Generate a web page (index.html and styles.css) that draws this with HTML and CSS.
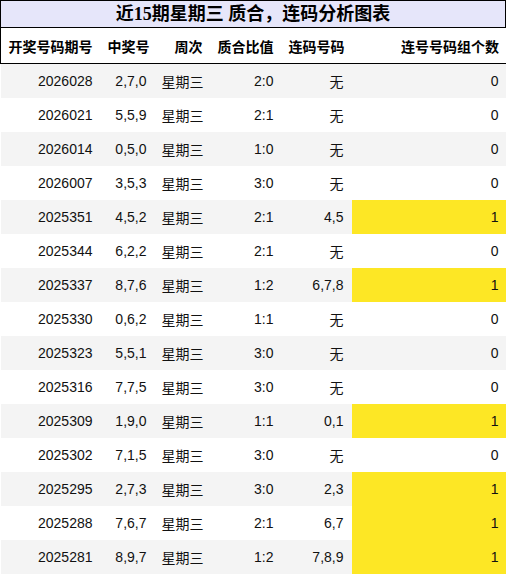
FILE: index.html
```html
<!DOCTYPE html>
<html>
<head>
<meta charset="utf-8">
<link rel="stylesheet" href="styles.css">
</head>
<body>
<div class="title">近15期星期三 质合，连码分析图表</div>
<table class="grid">
<colgroup>
<col class="c1"><col class="c2"><col class="c3"><col class="c4"><col class="c5"><col class="c6">
</colgroup>
<thead>
<tr><th>开奖号码期号</th><th>中奖号</th><th>周次</th><th>质合比值</th><th>连码号码</th><th>连号号码组个数</th></tr>
</thead>
<tbody>
<tr><td>2026028</td><td>2,7,0</td><td>星期三</td><td>2:0</td><td>无</td><td>0</td></tr>
<tr><td>2026021</td><td>5,5,9</td><td>星期三</td><td>2:1</td><td>无</td><td>0</td></tr>
<tr><td>2026014</td><td>0,5,0</td><td>星期三</td><td>1:0</td><td>无</td><td>0</td></tr>
<tr><td>2026007</td><td>3,5,3</td><td>星期三</td><td>3:0</td><td>无</td><td>0</td></tr>
<tr><td>2025351</td><td>4,5,2</td><td>星期三</td><td>2:1</td><td>4,5</td><td class="hit">1</td></tr>
<tr><td>2025344</td><td>6,2,2</td><td>星期三</td><td>2:1</td><td>无</td><td>0</td></tr>
<tr><td>2025337</td><td>8,7,6</td><td>星期三</td><td>1:2</td><td>6,7,8</td><td class="hit">1</td></tr>
<tr><td>2025330</td><td>0,6,2</td><td>星期三</td><td>1:1</td><td>无</td><td>0</td></tr>
<tr><td>2025323</td><td>5,5,1</td><td>星期三</td><td>3:0</td><td>无</td><td>0</td></tr>
<tr><td>2025316</td><td>7,7,5</td><td>星期三</td><td>3:0</td><td>无</td><td>0</td></tr>
<tr><td>2025309</td><td>1,9,0</td><td>星期三</td><td>1:1</td><td>0,1</td><td class="hit">1</td></tr>
<tr><td>2025302</td><td>7,1,5</td><td>星期三</td><td>3:0</td><td>无</td><td>0</td></tr>
<tr><td>2025295</td><td>2,7,3</td><td>星期三</td><td>3:0</td><td>2,3</td><td class="hit">1</td></tr>
<tr><td>2025288</td><td>7,6,7</td><td>星期三</td><td>2:1</td><td>6,7</td><td class="hit">1</td></tr>
<tr><td>2025281</td><td>8,9,7</td><td>星期三</td><td>1:2</td><td>7,8,9</td><td class="hit">1</td></tr>
</tbody>
</table>
</body>
</html>
```
FILE: styles.css
```css
html, body {
  margin: 0;
  padding: 0;
  background: #ffffff;
}
body {
  width: 506px;
  font-family: "Liberation Sans", "Noto Sans CJK SC", sans-serif;
  color: #111111;
}
.title {
  box-sizing: border-box;
  height: 28px;
  border: 1px solid #000000;
  background: #e6e6fa;
  text-align: center;
  font-family: "Liberation Serif", "Noto Sans CJK SC", serif;
  font-weight: bold;
  font-size: 18px;
  line-height: 26px;
  color: #000000;
}
.grid {
  width: 506px;
  border-collapse: collapse;
  table-layout: fixed;
  font-size: 14px;
}
.c1 { width: 100px; }
.c2 { width: 54px; }
.c3 { width: 56px; }
.c4 { width: 71px; }
.c5 { width: 70px; }
.c6 { width: 155px; }
.grid thead th {
  height: 35px;
  padding: 0 8px 0 7px;
  text-align: right;
  font-weight: bold;
  color: #000000;
  border-bottom: 1px solid #000000;
  white-space: nowrap;
}
.grid thead th:first-child { border-left: 1px solid #000000; }
.grid thead th:last-child { border-right: 1px solid #000000; padding-right: 7px; }
.grid tbody td {
  height: 34px;
  padding: 0 8px 0 7px;
  text-align: right;
  white-space: nowrap;
  color: #111111;
}
.grid tbody tr:nth-child(odd) td { background: #f4f4f4; }
.grid tbody td.hit,
.grid tbody tr:nth-child(odd) td.hit { background: #fde725; }
```
